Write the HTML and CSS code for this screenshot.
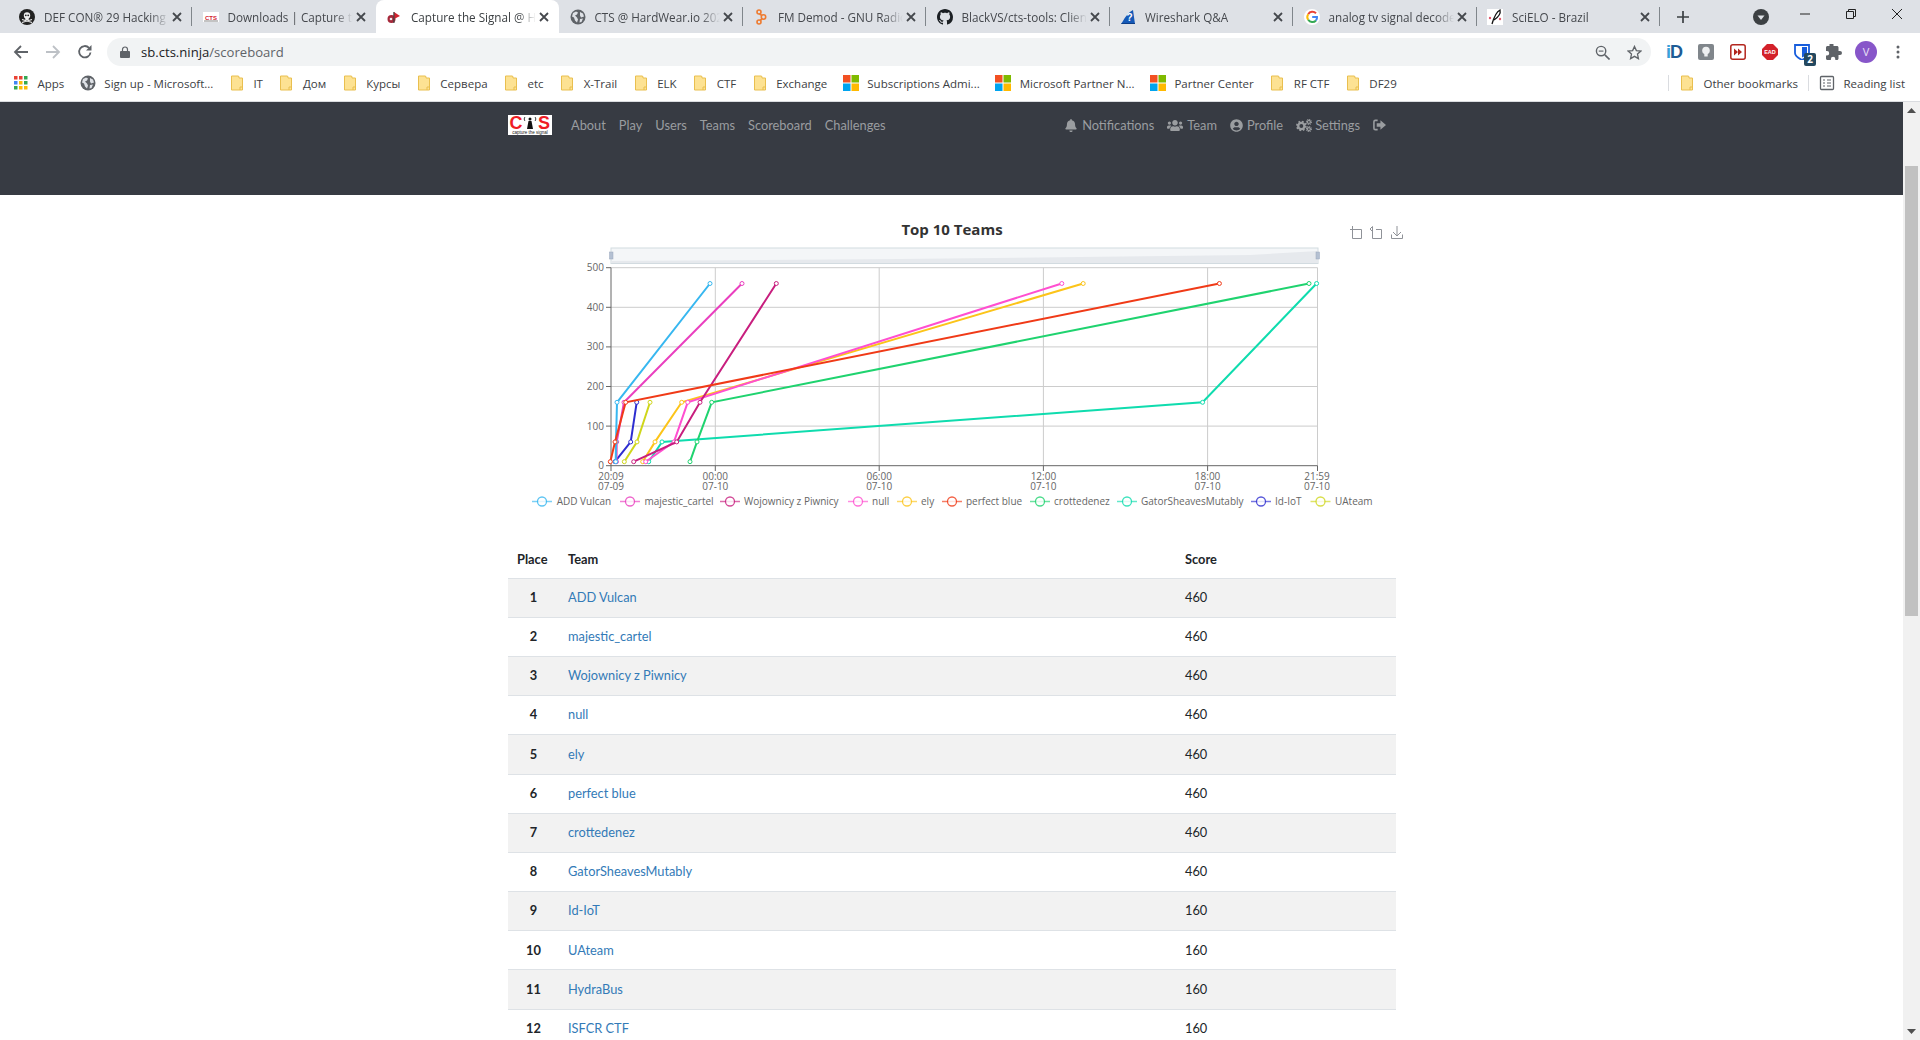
FILE: index.html
```html
<!DOCTYPE html>
<html lang="en">
<head>
    <meta charset="UTF-8">
    <title>Capture the Signal</title>
    <link rel="stylesheet" href="styles.css">
</head>
<body>
    <svg class="defs" width="0" height="0">
        <symbol id="icoClose" viewBox="0 0 16 16"><path d="M4 4l8 8M12 4l-8 8" fill="none" stroke="#45484d" stroke-width="1.8"/></symbol>
        <symbol id="icoGlobe" viewBox="0 0 16 16"><circle cx="8" cy="8" r="7.5" fill="#5f6368"/><path d="M3 4l3-1.5 2 1-1 2-2 1 2 2 1 2-1 3-2-2-1-3-2-1zM10 3l3 1.5 1 3-3 1-1-2zM10 10l3-.5-1.500 3.500-2 .5z" fill="#dee1e6"/></symbol>
        <symbol id="icoFolder" viewBox="0 0 16 16"><path d="M2.500 1h7l.5 1v1h3.500v12h-11z" fill="#fde293" stroke="#e9bf4f"/><path d="M11 15v-3h2.500" fill="none" stroke="#e9bf4f"/></symbol>
        <symbol id="icoMs" viewBox="0 0 16 16"><rect x="0" y="0" width="7.500" height="7.500" fill="#f25022"/><rect x="8.500" y="0" width="7.500" height="7.500" fill="#7fba00"/><rect x="0" y="8.500" width="7.500" height="7.500" fill="#00a4ef"/><rect x="8.500" y="8.500" width="7.500" height="7.500" fill="#ffb900"/></symbol>
    </svg>

    <!-- barra de pestanas -->
    <div class="tabstrip">
        <div class="tab sep">
            <svg class="fav" viewBox="0 0 16 16"><circle cx="8" cy="8" r="8" fill="#222"/><circle cx="8" cy="6.500" r="3.200" fill="#eee"/><rect x="6.300" y="8.500" width="3.400" height="2.500" fill="#eee"/><path d="M3 10.500l10 3M13 10.500l-10 3" stroke="#eee" stroke-width="1.200"/><circle cx="6.800" cy="6.300" r=".9" fill="#222"/><circle cx="9.200" cy="6.300" r=".9" fill="#222"/></svg>
            <span class="tab-title">DEF CON® 29 Hacking Village</span>
            <svg class="tab-close"><use href="#icoClose"/></svg>
        </div>
        <div class="tab">
            <svg class="fav" viewBox="0 0 16 16"><rect y="3" width="16" height="10" fill="#fff"/><text x="8" y="10.500" class="fav-cts">CTS</text><rect x="1" y="11.500" width="14" height="1" fill="#888"/></svg>
            <span class="tab-title">Downloads | Capture the Signal</span>
            <svg class="tab-close"><use href="#icoClose"/></svg>
        </div>
        <div class="tab active">
            <svg class="fav" viewBox="0 0 16 16"><circle cx="5.500" cy="10" r="4" fill="#a6283a"/><path d="M8 3l6 4-6 3z" fill="#d3232f"/><rect x="7.300" y="3" width="1.200" height="11" fill="#444"/><circle cx="5" cy="10" r="1.300" fill="#eee"/></svg>
            <span class="tab-title">Capture the Signal @ Hardwear</span>
            <svg class="tab-close"><use href="#icoClose"/></svg>
        </div>
        <div class="tab sep">
            <svg class="fav"><use href="#icoGlobe"/></svg>
            <span class="tab-title">CTS @ HardWear.io 2021</span>
            <svg class="tab-close"><use href="#icoClose"/></svg>
        </div>
        <div class="tab sep">
            <svg class="fav" viewBox="0 0 16 16"><g fill="none" stroke="#ee7b30" stroke-width="1.600"><circle cx="6" cy="3" r="2"/><circle cx="10.500" cy="8" r="2.200"/><circle cx="6" cy="13" r="2"/><path d="M6.500 5l2.500 1.500M9 10l-2 1.500"/></g></svg>
            <span class="tab-title">FM Demod - GNU Radio</span>
            <svg class="tab-close"><use href="#icoClose"/></svg>
        </div>
        <div class="tab sep">
            <svg class="fav" viewBox="0 0 16 16"><path fill="#1b1f23" d="M8 0C3.580 0 0 3.580 0 8c0 3.540 2.290 6.530 5.470 7.590.4.070.55-.17.55-.38 0-.19-.01-.82-.01-1.490-2.010.37-2.530-.49-2.690-.94-.09-.23-.48-.94-.82-1.130-.28-.15-.68-.52-.01-.53.63-.01 1.080.58 1.230.82.72 1.210 1.870.87 2.330.66.07-.52.28-.87.51-1.070-1.780-.2-3.640-.89-3.640-3.950 0-.87.31-1.590.82-2.150-.08-.2-.36-1.020.08-2.120 0 0 .67-.21 2.200.82.64-.18 1.320-.27 2-.27.68 0 1.360.09 2 .27 1.530-1.040 2.200-.82 2.200-.82.44 1.100.16 1.920.08 2.120.51.56.82 1.270.82 2.150 0 3.070-1.870 3.750-3.650 3.950.29.25.54.73.54 1.480 0 1.070-.01 1.930-.01 2.200 0 .21.15.46.55.38A8.013 8.013 0 0016 8c0-4.420-3.580-8-8-8z"/></svg>
            <span class="tab-title">BlackVS/cts-tools: Client</span>
            <svg class="tab-close"><use href="#icoClose"/></svg>
        </div>
        <div class="tab sep">
            <svg class="fav" viewBox="0 0 16 16"><path d="M1 15C4 11 6 5 13 1l2 14z" fill="#1559b7"/><path d="M1 15h14v-1H2z" fill="#0c3d86"/><text x="9.500" y="11.500" class="fav-q">?</text></svg>
            <span class="tab-title">Wireshark Q&amp;A</span>
            <svg class="tab-close"><use href="#icoClose"/></svg>
        </div>
        <div class="tab sep">
            <svg class="fav" viewBox="0 0 16 16"><circle cx="8" cy="8" r="8" fill="#fff"/><g fill="none" stroke-width="2"><path d="M12 4.300A5 5 0 0 0 4.200 5.200" stroke="#ea4335"/><path d="M4.200 5.200a5 5 0 0 0 0 5.600" stroke="#fbbc05"/><path d="M4.200 10.800a5 5 0 0 0 7.800.7" stroke="#34a853"/><path d="M12 11.500A5 5 0 0 0 13 8H8.200" stroke="#4285f4"/></g></svg>
            <span class="tab-title">analog tv signal decoder</span>
            <svg class="tab-close"><use href="#icoClose"/></svg>
        </div>
        <div class="tab sep">
            <svg class="fav" viewBox="0 0 16 16"><rect width="16" height="16" fill="#fff"/><path d="M5 15C7 8 9 3 13 1c1 4-3 8-6 10" fill="none" stroke="#111" stroke-width="1.300"/><circle cx="3" cy="9" r="1.200" fill="#e0566b"/><circle cx="13" cy="10" r="1.200" fill="#e0566b"/></svg>
            <span class="tab-title">SciELO - Brazil</span>
            <svg class="tab-close"><use href="#icoClose"/></svg>
        </div>
        <svg class="newtab" viewBox="0 0 14 14"><path d="M7 1v12M1 7h12" stroke="#3c4043" stroke-width="1.700"/></svg>
        <svg class="chip" viewBox="0 0 16 16"><circle cx="8" cy="8" r="8" fill="#3c4043"/><path d="M4.500 6.500h7L8 11z" fill="#dee1e6"/></svg>
        <div class="winbtn"><svg viewBox="0 0 10 10"><path d="M0 5h10" stroke="#222" stroke-width="1"/></svg></div>
        <div class="winbtn"><svg viewBox="0 0 10 10"><path d="M.5 2.500h7v7h-7zM2.500 2.500v-2h7v7h-2" fill="none" stroke="#222"/></svg></div>
        <div class="winbtn"><svg viewBox="0 0 10 10"><path d="M0 0l10 10M10 0L0 10" stroke="#222"/></svg></div>
    </div>

    <!-- barra de direccion -->
    <div class="toolbar">
        <div class="tbtn"><svg viewBox="0 0 16 16"><path d="M15 8H2M8 2L2 8l6 6" fill="none" stroke="#5f6368" stroke-width="1.800"/></svg></div>
        <div class="tbtn"><svg viewBox="0 0 16 16"><path d="M1 8h13M8 2l6 6-6 6" fill="none" stroke="#bdc1c6" stroke-width="1.800"/></svg></div>
        <div class="tbtn"><svg viewBox="0 0 16 16"><path d="M13.500 8.500A5.700 5.700 0 1 1 12 3.800" fill="none" stroke="#5f6368" stroke-width="1.800"/><path d="M14.500 1v5.500H9z" fill="#5f6368"/></svg></div>
        <div class="omnibox">
            <svg class="lock" viewBox="0 0 10 12"><path d="M2.500 5V3.500a2.500 2.500 0 0 1 5 0V5" fill="none" stroke="#5f6368" stroke-width="1.200"/><rect y="5" width="10" height="7" rx="1" fill="#5f6368"/></svg>
            <span class="url"><b>sb.cts.ninja</b>/scoreboard</span>
            <svg class="omni-ico first" viewBox="0 0 16 16"><circle cx="6.500" cy="6.500" r="5" fill="none" stroke="#5f6368" stroke-width="1.500"/><path d="M10.500 10.500l5 5" stroke="#5f6368" stroke-width="1.700"/><path d="M4 6.500h5" stroke="#5f6368" stroke-width="1.200"/></svg>
            <svg class="omni-ico" viewBox="0 0 16 16"><path d="M8 1.500l2 4.500 4.800.5-3.600 3.200 1 4.800L8 12.100l-4.200 2.400 1-4.800L1.200 6.500 6 6z" fill="none" stroke="#5f6368" stroke-width="1.400"/></svg>
        </div>
        <div class="exts">
            <div class="tbtn"><span class="ext-id"><i>i</i>D</span></div>
            <div class="tbtn"><svg viewBox="0 0 16 16"><rect width="16" height="16" rx="2" fill="#80868b"/><circle cx="8" cy="6.500" r="3.800" fill="#eef0f1"/><rect x="6.300" y="10" width="3.400" height="2.500" fill="#eef0f1"/></svg></div>
            <div class="tbtn"><svg viewBox="0 0 16 16"><rect x=".8" y=".8" width="14.400" height="14.400" rx="2" fill="#fff" stroke="#b3261e" stroke-width="1.500"/><path d="M4 4.500L8 8l-4 3.500zM8 4.500L12 8l-4 3.500z" fill="#b3261e"/></svg></div>
            <div class="tbtn"><svg viewBox="0 0 16 16"><path d="M5 0h6l5 5v6l-5 5H5l-5-5V5z" fill="#d3222a"/><text x="8" y="10" class="ext-ead">EAD</text></svg></div>
            <div class="tbtn"><div class="ext-bw"><svg viewBox="0 0 16 16"><path d="M1 1h14v8c0 3-3 5-7 7-4-2-7-4-7-7z" fill="none" stroke="#175ddc" stroke-width="1.800"/><path d="M8 3h5v6c0 2-2 3-5 4.500z" fill="#175ddc"/></svg><span class="badge">2</span></div></div>
            <div class="tbtn"><svg viewBox="0 0 16 16"><path d="M14 7h-1.500V3.500c0-.8-.7-1.500-1.500-1.500H7.500V.8a2 2 0 0 0-4 0V2H1.500C.7 2 0 2.700 0 3.500V7h1a2.200 2.200 0 0 1 0 4.400H0v3c0 .8.700 1.600 1.500 1.600h3.400v-1a2.200 2.200 0 0 1 4.400 0v1H11c.8 0 1.500-.8 1.500-1.600V11H14a2 2 0 0 0 0-4z" fill="#5f6368"/></svg></div>
            <div class="tbtn"><span class="avatar">V</span></div>
            <div class="tbtn"><svg viewBox="0 0 16 16"><circle cx="8" cy="3" r="1.500" fill="#5f6368"/><circle cx="8" cy="8" r="1.500" fill="#5f6368"/><circle cx="8" cy="13" r="1.500" fill="#5f6368"/></svg></div>
        </div>
    </div>

    <!-- marcadores -->
    <div class="bookmarks">
        <div class="bm"><svg viewBox="0 0 16 16"><g fill="#ea4335"><rect x="1" y="1" width="3.500" height="3.500"/><rect x="6" y="1" width="3.500" height="3.500"/></g><rect x="11" y="1" width="3.500" height="3.500" fill="#34a853"/><rect x="1" y="6" width="3.500" height="3.500" fill="#4285f4"/><rect x="11" y="6" width="3.500" height="3.500" fill="#34a853"/><rect x="6" y="6" width="3.500" height="3.500" fill="#fbbc05"/><rect x="1" y="11" width="3.500" height="3.500" fill="#34a853"/><rect x="6" y="11" width="3.500" height="3.500" fill="#fbbc05"/><rect x="11" y="11" width="3.500" height="3.500" fill="#fbbc05"/></svg>Apps</div>
        <div class="bm"><svg><use href="#icoGlobe"/></svg>Sign up - Microsoft...</div>
        <div class="bm"><svg><use href="#icoFolder"/></svg>IT</div>
        <div class="bm"><svg><use href="#icoFolder"/></svg>Дом</div>
        <div class="bm"><svg><use href="#icoFolder"/></svg>Курсы</div>
        <div class="bm"><svg><use href="#icoFolder"/></svg>Сервера</div>
        <div class="bm"><svg><use href="#icoFolder"/></svg>etc</div>
        <div class="bm"><svg><use href="#icoFolder"/></svg>X-Trail</div>
        <div class="bm"><svg><use href="#icoFolder"/></svg>ELK</div>
        <div class="bm"><svg><use href="#icoFolder"/></svg>CTF</div>
        <div class="bm"><svg><use href="#icoFolder"/></svg>Exchange</div>
        <div class="bm"><svg><use href="#icoMs"/></svg>Subscriptions Admi...</div>
        <div class="bm"><svg><use href="#icoMs"/></svg>Microsoft Partner N...</div>
        <div class="bm"><svg><use href="#icoMs"/></svg>Partner Center</div>
        <div class="bm"><svg><use href="#icoFolder"/></svg>RF CTF</div>
        <div class="bm"><svg><use href="#icoFolder"/></svg>DF29</div>
        <div class="bm-right">
            <div class="bm bm-sep"><svg><use href="#icoFolder"/></svg>Other bookmarks</div>
            <div class="bm bm-sep"><svg viewBox="0 0 16 16"><rect x="1.500" y="1.500" width="13" height="13" rx="1" fill="none" stroke="#5f6368" stroke-width="1.300"/><path d="M4 5h2M8 5h4M4 8h2M8 8h4M4 11h2M8 11h4" stroke="#5f6368" stroke-width="1.200"/></svg>Reading list</div>
        </div>
    </div>

    <div class="viewport">
        <main class="pagina">
            <nav class="navbar">
                <div class="nav-inner">
                    <svg class="logo" viewBox="0 0 44 20">
                        <rect width="44" height="20" fill="#fff"/>
                        <text x="1.500" y="14" class="logo-txt">C</text>
                        <text x="30" y="14" class="logo-txt">S</text>
                        <path d="M20.500 6h3l1.500 8h-6z" fill="#111"/><circle cx="22" cy="4" r="1.500" fill="#111"/><path d="M17 2c-1 1-1 3 0 4M27 2c1 1 1 3 0 4" fill="none" stroke="#111" stroke-width=".8"/>
                        <text x="22" y="18.800" class="logo-sub">capture the signal</text>
                    </svg>
                    <a class="nav-link" href="#">About</a>
                    <a class="nav-link" href="#">Play</a>
                    <a class="nav-link" href="#">Users</a>
                    <a class="nav-link" href="#">Teams</a>
                    <a class="nav-link" href="#">Scoreboard</a>
                    <a class="nav-link" href="#">Challenges</a>
                    <div class="nav-right">
                        <a class="nav-link" href="#"><svg class="fa bell" viewBox="0 0 448 512"><path d="M224 512c35.320 0 63.970-28.650 63.970-64H160.030c0 35.350 28.650 64 63.970 64zm215.390-149.710c-19.320-20.760-55.470-51.990-55.470-154.290 0-77.700-54.480-139.900-127.940-155.160V32c0-17.670-14.320-32-31.980-32s-31.980 14.330-31.980 32v20.840C118.560 68.100 64.080 130.300 64.080 208c0 102.300-36.150 133.530-55.470 154.290-6 6.450-8.660 14.160-8.610 21.710.11 16.400 12.980 32 32.100 32h383.800c19.120 0 32-15.600 32.100-32 .05-7.550-2.610-15.270-8.610-21.710z"/></svg>Notifications</a>
                        <a class="nav-link" href="#"><svg class="fa users" viewBox="0 0 640 512"><path d="M96 224c35.300 0 64-28.700 64-64s-28.700-64-64-64-64 28.700-64 64 28.700 64 64 64zm448 0c35.300 0 64-28.700 64-64s-28.700-64-64-64-64 28.700-64 64 28.700 64 64 64zm32 32h-64c-17.600 0-33.500 7.100-45.100 18.600 40.300 22.100 68.900 62 75.100 109.400h66c17.700 0 32-14.300 32-32v-32c0-35.300-28.700-64-64-64zm-256 0c61.900 0 112-50.100 112-112S381.900 32 320 32 208 82.100 208 144s50.100 112 112 112zm76.800 32h-8.300c-20.800 10-43.900 16-68.500 16s-47.600-6-68.500-16h-8.300C179.600 288 128 339.600 128 403.200V432c0 26.500 21.500 48 48 48h288c26.500 0 48-21.500 48-48v-28.800c0-63.600-51.600-115.200-115.200-115.200zm-223.700-13.400C161.500 263.100 145.600 256 128 256H64c-35.300 0-64 28.700-64 64v32c0 17.700 14.300 32 32 32h65.900c6.300-47.400 34.900-87.300 75.200-109.400z"/></svg>Team</a>
                        <a class="nav-link" href="#"><svg class="fa user" viewBox="0 0 496 512"><path d="M248 8C111 8 0 119 0 256s111 248 248 248 248-111 248-248S385 8 248 8zm0 96c48.600 0 88 39.400 88 88s-39.400 88-88 88-88-39.400-88-88 39.400-88 88-88zm0 344c-58.700 0-111.300-26.600-146.500-68.200 18.800-35.400 55.600-59.800 98.500-59.800 2.400 0 4.800.4 7.100 1.100 13 4.200 26.600 6.900 40.900 6.900 14.300 0 28-2.700 40.900-6.900 2.300-.7 4.700-1.100 7.100-1.100 42.900 0 79.700 24.400 98.500 59.800C359.300 421.400 306.700 448 248 448z"/></svg>Profile</a>
                        <a class="nav-link" href="#"><svg class="fa cogs" viewBox="0 0 18 14"><g fill="none" stroke="#9a9da0"><circle cx="6" cy="7.500" r="3.500" stroke-width="2.600"/><circle cx="6" cy="7.500" r="5" stroke-width="2" stroke-dasharray="2 1.930"/><circle cx="14.500" cy="3" r="1.700" stroke-width="1.400"/><circle cx="14.500" cy="3" r="2.800" stroke-width="1.200" stroke-dasharray="1.200 1.000"/><circle cx="14.500" cy="11" r="1.700" stroke-width="1.400"/><circle cx="14.500" cy="11" r="2.800" stroke-width="1.200" stroke-dasharray="1.200 1.000"/></g></svg>Settings</a>
                        <a class="nav-link" href="#"><svg class="fa salir" viewBox="0 0 14 12"><path d="M5 1H2.500A1.500 1.500 0 0 0 1 2.500v7A1.500 1.500 0 0 0 2.500 11H5" fill="none" stroke="#9a9da0" stroke-width="1.700"/><path d="M8 1l6 5-6 5V8H4V4h4z" fill="#9a9da0"/></svg></a>
                    </div>
                </div>
            </nav>

            <div class="contenedor">
                <!-- grafico: lienzo con coordenadas de pagina -->
                <svg class="grafico" width="887" height="340" viewBox="508 195 887 340">
                    <text x="952" y="235" class="g-titulo">Top 10 Teams</text>

                    <g class="toolbox">
                        <path d="M1352.500 226v12.500h9v-9h-11.500"/>
                        <path d="M1376 229.500h5.500v9h-9v-9M1372.500 226.500v5l-2.500-2.500z"/>
                        <path d="M1397 226v10M1393 232l4 4 4-4M1391.500 234.500v4h11v-4"/>
                    </g>

                    <!-- slider -->
                    <rect x="611" y="248" width="707" height="15.500" class="z-fondo"/>
                    <path d="M611 261L900 259 1250 255 1318 251V263H611z" class="z-sombra"/>
                    <rect x="609.500" y="252" width="3.500" height="7" class="z-asa"/>
                    <rect x="1316" y="252" width="3.500" height="7" class="z-asa"/>

                    <!-- rejilla -->
                    <g class="rejilla">
                        <path d="M611 267.700H1317.500M611 307.300H1317.500M611 346.900H1317.500M611 386.500H1317.500M611 426.100H1317.500"/>
                        <path d="M715.300 267.700V465.700M879.200 267.700V465.700M1043.400 267.700V465.700M1207.600 267.700V465.700M1317.500 267.700V465.700"/>
                    </g>
                    <g class="ejes">
                        <path d="M611 267.700V465.700H1317.500"/>
                        <path d="M606 267.700H611M606 307.300H611M606 346.900H611M606 386.500H611M606 426.100H611M606 465.700H611"/>
                        <path d="M611 465.700V471M715.300 465.700V471M879.200 465.700V471M1043.400 465.700V471M1207.600 465.700V471M1317.500 465.700V471"/>
                    </g>
                    <g class="y-labels">
                        <text x="604" y="271.200">500</text>
                        <text x="604" y="310.800">400</text>
                        <text x="604" y="350.400">300</text>
                        <text x="604" y="390">200</text>
                        <text x="604" y="429.600">100</text>
                        <text x="604" y="469.200">0</text>
                    </g>
                    <g class="x-labels">
                        <text x="611" y="480">20:09</text><text x="611" y="490">07-09</text>
                        <text x="715.300" y="480">00:00</text><text x="715.300" y="490">07-10</text>
                        <text x="879.200" y="480">06:00</text><text x="879.200" y="490">07-10</text>
                        <text x="1043.400" y="480">12:00</text><text x="1043.400" y="490">07-10</text>
                        <text x="1207.600" y="480">18:00</text><text x="1207.600" y="490">07-10</text>
                        <text x="1317" y="480">21:59</text><text x="1317" y="490">07-10</text>
                    </g>

                    <!-- series, puntos 10 / 60 / 160 / 460 -->
                    <g class="serie s10"><polyline points="624.300,461.700 637,441.900 650,402.300"/><circle cx="624.300" cy="461.700"/><circle cx="637" cy="441.900"/><circle cx="650" cy="402.300"/></g>
                    <g class="serie s9"><polyline points="615,461.700 630.700,441.900 636.700,402.300"/><circle cx="615" cy="461.700"/><circle cx="630.700" cy="441.900"/><circle cx="636.700" cy="402.300"/></g>
                    <g class="serie s8"><polyline points="648.700,461.700 662,441.900 1202.600,402.300 1316.600,283.500"/><circle cx="648.700" cy="461.700"/><circle cx="662" cy="441.900"/><circle cx="1202.600" cy="402.300"/><circle cx="1316.600" cy="283.500"/></g>
                    <g class="serie s7"><polyline points="690,461.700 697,441.900 711.700,402.300 1309,283.500"/><circle cx="690" cy="461.700"/><circle cx="697" cy="441.900"/><circle cx="711.700" cy="402.300"/><circle cx="1309" cy="283.500"/></g>
                    <g class="serie s5"><polyline points="642.700,461.700 655,441.900 681.700,402.300 1083.200,283.500"/><circle cx="642.700" cy="461.700"/><circle cx="655" cy="441.900"/><circle cx="681.700" cy="402.300"/><circle cx="1083.200" cy="283.500"/></g>
                    <g class="serie s4"><polyline points="645.700,461.700 674,441.900 687.700,402.300 1061.800,283.500"/><circle cx="645.700" cy="461.700"/><circle cx="674" cy="441.900"/><circle cx="687.700" cy="402.300"/><circle cx="1061.800" cy="283.500"/></g>
                    <g class="serie s3"><polyline points="633.700,461.700 676.700,441.900 700,402.300 776.300,283.500"/><circle cx="633.700" cy="461.700"/><circle cx="676.700" cy="441.900"/><circle cx="700" cy="402.300"/><circle cx="776.300" cy="283.500"/></g>
                    <g class="serie s2"><polyline points="616.500,461.700 616.700,441.900 624,402.300 742,283.500"/><circle cx="616.500" cy="461.700"/><circle cx="616.700" cy="441.900"/><circle cx="624" cy="402.300"/><circle cx="742" cy="283.500"/></g>
                    <g class="serie s1"><polyline points="615.700,461.700 616,441.900 617,402.300 710,283.500"/><circle cx="615.700" cy="461.700"/><circle cx="616" cy="441.900"/><circle cx="617" cy="402.300"/><circle cx="710" cy="283.500"/></g>
                    <g class="serie s6"><polyline points="610.300,461.700 615,441.900 625.700,402.300 1219.400,283.500"/><circle cx="610.300" cy="461.700"/><circle cx="615" cy="441.900"/><circle cx="625.700" cy="402.300"/><circle cx="1219.400" cy="283.500"/></g>

                    <!-- leyenda -->
                    <g class="leyenda">
                        <g class="s1"><path d="M532 501.500h20"/><circle cx="542" cy="501.500" r="4.500"/></g><text x="556.700" y="505">ADD Vulcan</text>
                        <g class="s2"><path d="M620 501.500h20"/><circle cx="630" cy="501.500" r="4.500"/></g><text x="644.500" y="505">majestic_cartel</text>
                        <g class="s3"><path d="M720 501.500h20"/><circle cx="730" cy="501.500" r="4.500"/></g><text x="744" y="505">Wojownicy z Piwnicy</text>
                        <g class="s4"><path d="M848 501.500h20"/><circle cx="858" cy="501.500" r="4.500"/></g><text x="872" y="505">null</text>
                        <g class="s5"><path d="M897 501.500h20"/><circle cx="907" cy="501.500" r="4.500"/></g><text x="921" y="505">ely</text>
                        <g class="s6"><path d="M942 501.500h20"/><circle cx="952" cy="501.500" r="4.500"/></g><text x="966" y="505">perfect blue</text>
                        <g class="s7"><path d="M1030 501.500h20"/><circle cx="1040" cy="501.500" r="4.500"/></g><text x="1054" y="505">crottedenez</text>
                        <g class="s8"><path d="M1117 501.500h20"/><circle cx="1127" cy="501.500" r="4.500"/></g><text x="1141" y="505">GatorSheavesMutably</text>
                        <g class="s9"><path d="M1251 501.500h20"/><circle cx="1261" cy="501.500" r="4.500"/></g><text x="1275" y="505">Id-IoT</text>
                        <g class="s10"><path d="M1310.500 501.500h20"/><circle cx="1320.500" cy="501.500" r="4.500"/></g><text x="1335" y="505">UAteam</text>
                    </g>
                </svg>

                <table class="tabla">
                    <colgroup>
                        <col class="col-place">
                        <col class="col-team">
                        <col class="col-score">
                    </colgroup>
                    <thead>
                        <tr><th>Place</th><th>Team</th><th>Score</th></tr>
                    </thead>
                    <tbody>
                        <tr><th>1</th><td><a href="#">ADD Vulcan</a></td><td>460</td></tr>
                        <tr><th>2</th><td><a href="#">majestic_cartel</a></td><td>460</td></tr>
                        <tr><th>3</th><td><a href="#">Wojownicy z Piwnicy</a></td><td>460</td></tr>
                        <tr><th>4</th><td><a href="#">null</a></td><td>460</td></tr>
                        <tr><th>5</th><td><a href="#">ely</a></td><td>460</td></tr>
                        <tr><th>6</th><td><a href="#">perfect blue</a></td><td>460</td></tr>
                        <tr><th>7</th><td><a href="#">crottedenez</a></td><td>460</td></tr>
                        <tr><th>8</th><td><a href="#">GatorSheavesMutably</a></td><td>460</td></tr>
                        <tr><th>9</th><td><a href="#">Id-IoT</a></td><td>160</td></tr>
                        <tr><th>10</th><td><a href="#">UAteam</a></td><td>160</td></tr>
                        <tr><th>11</th><td><a href="#">HydraBus</a></td><td>160</td></tr>
                        <tr><th>12</th><td><a href="#">ISFCR CTF</a></td><td>160</td></tr>
                    </tbody>
                </table>
            </div>
        </main>

        <div class="scrollbar">
            <div class="sb-arrow"><svg viewBox="0 0 9 5"><path d="M4.500 0L9 5H0z" fill="#505050"/></svg></div>
            <div class="sb-track"><div class="sb-thumb"></div></div>
            <div class="sb-arrow"><svg viewBox="0 0 9 5"><path d="M0 0h9L4.500 5z" fill="#505050"/></svg></div>
        </div>
    </div>
</body>
</html>
```

FILE: styles.css
```css
* {
    box-sizing: border-box;
}
html, body {
    margin: 0;
    height: 1040px;
    overflow: hidden;
}
body {
    display: flex;
    flex-direction: column;
    background-color: #fff;
    font-family: "Lato", "Liberation Sans", sans-serif;
}
.defs {
    display: block;
    height: 0;
}

/* pestanas */
.tabstrip {
    display: flex;
    align-items: stretch;
    height: 33px;
    padding-left: 8.5px;
    background-color: #dee1e6;
    font-family: "Open Sans", "Liberation Sans", sans-serif;
    font-size: 11.7px;
    color: #45484d;
}
.tab {
    display: flex;
    align-items: center;
    flex: 0 0 183.5px;
    min-width: 0;
    height: 33px;
    padding-left: 10.5px;
}
.tab.sep {
    background: linear-gradient(#80868b, #80868b) right 7px / 1px 19px no-repeat;
}
.tab.active {
    background-color: #fff;
    border-radius: 8px 8px 0 0;
    color: #3c4043;
}
.fav {
    flex: 0 0 16px;
    width: 16px;
    height: 16px;
}
.fav-cts {
    font-family: "Liberation Sans", sans-serif;
    font-size: 6px;
    font-weight: bold;
    fill: #d3232f;
    text-anchor: middle;
}
.fav-q {
    font-family: "Liberation Sans", sans-serif;
    font-size: 10px;
    font-weight: bold;
    fill: #fff;
    text-anchor: middle;
}
.tab-title {
    flex: 1;
    min-width: 0;
    margin-left: 9px;
    overflow: hidden;
    white-space: nowrap;
    -webkit-mask-image: linear-gradient(to right, #000 85%, transparent 100%);
    mask-image: linear-gradient(to right, #000 85%, transparent 100%);
}
.tab-close {
    flex: 0 0 16px;
    width: 16px;
    height: 16px;
    margin-right: 7px;
}
.newtab {
    width: 14px;
    height: 14px;
    margin: 10px 0 0 16px;
}
.chip {
    width: 16px;
    height: 16px;
    margin: 9px 13px 0 auto;
}
.winbtn {
    flex: 0 0 46px;
    display: flex;
    justify-content: center;
    padding-top: 9px;
}
.winbtn svg {
    width: 10px;
    height: 10px;
}

/* barra de direccion */
.toolbar {
    display: flex;
    align-items: center;
    height: 38px;
    padding: 0 6px 0 5px;
    background-color: #fff;
}
.tbtn {
    flex: 0 0 32px;
    display: flex;
    justify-content: center;
    align-items: center;
    height: 28px;
}
.tbtn svg {
    width: 16px;
    height: 16px;
}
.omnibox {
    flex: 1;
    display: flex;
    align-items: center;
    height: 28px;
    margin-left: 6px;
    padding: 0 9px 0 13px;
    background-color: #f1f3f4;
    border-radius: 14px;
    font-family: "Open Sans", "Liberation Sans", sans-serif;
    font-size: 13.1px;
    color: #5f6368;
}
.lock {
    width: 10px;
    height: 12px;
    margin-right: 11px;
}
.url b {
    font-weight: normal;
    color: #202124;
}
.omni-ico {
    width: 15px;
    height: 15px;
    margin-left: 17px;
}
.omni-ico.first {
    margin-left: auto;
}
.exts {
    display: flex;
    margin-left: 7px;
}
.ext-id {
    font-family: "Liberation Sans", sans-serif;
    font-size: 18px;
    font-weight: bold;
    letter-spacing: -1px;
    color: #1d5c96;
}
.ext-id i {
    font-style: normal;
    color: #3aa0d8;
}
.ext-ead {
    font-family: "Liberation Sans", sans-serif;
    font-size: 5.500px;
    font-weight: bold;
    fill: #fff;
    text-anchor: middle;
}
.ext-bw {
    position: relative;
    width: 16px;
    height: 16px;
}
.badge {
    position: absolute;
    right: -6px;
    bottom: -6px;
    width: 12px;
    height: 13px;
    border-radius: 2px;
    background-color: #24485f;
    color: #fff;
    font-family: "Open Sans", sans-serif;
    font-size: 10px;
    font-weight: bold;
    line-height: 13px;
    text-align: center;
}
.avatar {
    width: 22px;
    height: 22px;
    border-radius: 50%;
    background-color: #8756c9;
    color: #e9e0f7;
    font-family: "Open Sans", sans-serif;
    font-size: 11px;
    line-height: 22px;
    text-align: center;
}

/* marcadores */
.bookmarks {
    display: flex;
    align-items: center;
    gap: 15.5px;
    height: 31px;
    padding: 0 15px 6px 13px;
    background-color: #fff;
    border-bottom: 1px solid #dadce0;
    font-family: "Open Sans", "Liberation Sans", sans-serif;
    font-size: 11.5px;
    color: #3c4043;
    white-space: nowrap;
}
.bm {
    display: flex;
    align-items: center;
    gap: 8.5px;
}
.bm svg {
    width: 16px;
    height: 16px;
}
.bm-right {
    display: flex;
    margin-left: auto;
}
.bm-sep {
    padding-left: 10px;
    margin-left: 10px;
    border-left: 1px solid #dadce0;
}

/* pagina */
.viewport {
    flex: 1;
    display: flex;
    min-height: 0;
}
.pagina {
    flex: 1;
    min-width: 0;
    overflow: hidden;
}
.navbar {
    height: 93px;
    background-color: #373b43;
}
.nav-inner {
    display: flex;
    align-items: center;
    width: 887px;
    height: 46px;
    margin: 0 auto;
    font-size: 12.8px;
}
.logo {
    width: 44px;
    height: 20px;
    margin-right: 19px;
}
.logo-txt {
    font-family: "Liberation Sans", sans-serif;
    font-size: 18px;
    font-weight: bold;
    fill: #ee1c25;
}
.logo-sub {
    font-family: "Liberation Sans", sans-serif;
    font-size: 4.500px;
    fill: #222;
    text-anchor: middle;
}
.nav-link {
    display: flex;
    align-items: center;
    margin-right: 13px;
    color: #9a9da0;
    text-decoration: none;
    white-space: nowrap;
}
.nav-right {
    display: flex;
    margin-left: auto;
}
.nav-right .nav-link:last-child {
    margin-right: 9px;
}
.fa {
    height: 13px;
    margin-right: 4px;
    fill: #9a9da0;
}
.bell {
    width: 12px;
    margin-right: 5px;
}
.users {
    width: 16px;
}
.user {
    width: 13px;
}
.cogs {
    width: 16px;
    margin-right: 3px;
}
.salir {
    width: 13px;
    height: 12px;
    margin-right: 0;
}
.contenedor {
    width: 887px;
    margin: 0 auto;
}

/* grafico */
.grafico {
    display: block;
    overflow: visible;
    font-family: "Open Sans", "Liberation Sans", sans-serif;
}
.g-titulo {
    font-size: 15px;
    font-weight: bold;
    fill: #333;
    text-anchor: middle;
}
.toolbox path {
    fill: none;
    stroke: #8f9298;
    stroke-width: 1;
}
.z-fondo {
    fill: #f4f6f8;
    stroke: #d2dbe0;
}
.z-sombra {
    fill: #e6e9ed;
}
.z-asa {
    fill: #b4c0d2;
    stroke: #9aa8bd;
    stroke-width: .5;
}
.rejilla path {
    fill: none;
    stroke: #ccc;
    stroke-width: 1;
}
.ejes path {
    fill: none;
    stroke: #666;
    stroke-width: 1;
}
.y-labels text {
    font-size: 10px;
    fill: #666;
    text-anchor: end;
}
.x-labels text {
    font-size: 10px;
    fill: #666;
    text-anchor: middle;
}
.serie polyline {
    fill: none;
    stroke-width: 2;
}
.serie circle {
    r: 2px;
    fill: #fff;
    stroke-width: 1;
}
.leyenda text {
    font-size: 10px;
    fill: #666;
}
.leyenda path {
    stroke-width: 1.500;
    opacity: .65;
}
.leyenda circle {
    fill: #fff;
    stroke-width: 1.300;
    opacity: .8;
}
.s1 polyline, .s1 circle, .s1 path { stroke: #37b7f0; }
.s2 polyline, .s2 circle, .s2 path { stroke: #ea3fbf; }
.s3 polyline, .s3 circle, .s3 path { stroke: #c81e7e; }
.s4 polyline, .s4 circle, .s4 path { stroke: #ff4fd0; }
.s5 polyline, .s5 circle, .s5 path { stroke: #fcc419; }
.s6 polyline, .s6 circle, .s6 path { stroke: #f03a17; }
.s7 polyline, .s7 circle, .s7 path { stroke: #1fd36f; }
.s8 polyline, .s8 circle, .s8 path { stroke: #0fdcae; }
.s9 polyline, .s9 circle, .s9 path { stroke: #2d2dd0; }
.s10 polyline, .s10 circle, .s10 path { stroke: #cfd61a; }

/* tabla */
.tabla {
    width: 888px;
    margin-top: 4px;
    border-collapse: collapse;
    table-layout: fixed;
    font-size: 12.8px;
    line-height: 21.6px;
    color: #212529;
}
.col-place {
    width: 51px;
}
.col-score {
    width: 220px;
}
.tabla th, .tabla td {
    height: 39.2px;
    padding: 8.3px 9px;
    text-align: left;
    border-top: 1px solid #dee2e6;
}
.tabla thead th {
    height: 39px;
    padding-top: 10px;
    padding-bottom: 7px;
    border-top: 0;
    border-bottom: 1px solid #dee2e6;
}
.tabla tbody th {
    text-align: center;
}
.tabla tbody tr:nth-child(odd) {
    background-color: #f2f2f2;
}
.tabla a {
    color: #337ab7;
    text-decoration: none;
}

/* scroll */
.scrollbar {
    flex: 0 0 17px;
    display: flex;
    flex-direction: column;
    background-color: #f1f1f1;
}
.sb-arrow {
    flex: 0 0 17px;
    display: flex;
    justify-content: center;
    align-items: center;
}
.sb-arrow svg {
    width: 9px;
    height: 5px;
}
.sb-track {
    flex: 1;
    padding: 47px 2px 0;
}
.sb-thumb {
    height: 450px;
    background-color: #c1c1c1;
}
```
